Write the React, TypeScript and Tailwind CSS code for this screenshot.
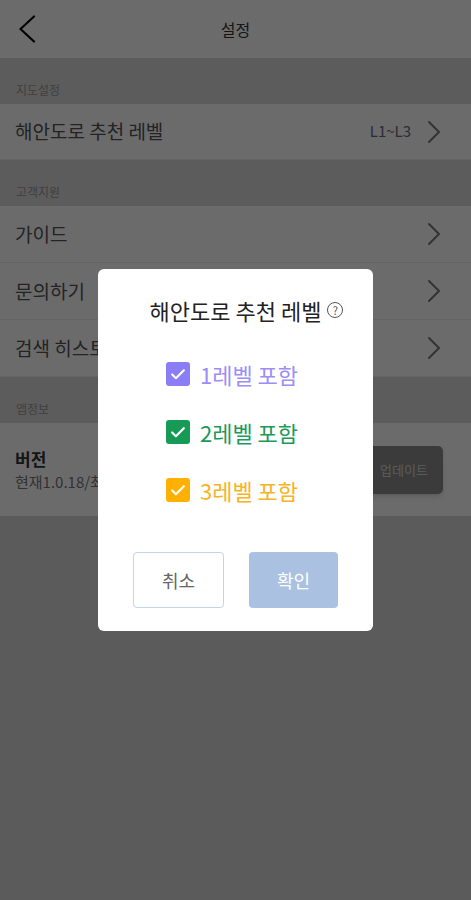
const font = { fontFamily: '"Noto Sans CJK KR", "Noto Sans", sans-serif' };

function Chevron() {
  return (
    <svg viewBox="0 0 14 24" className="h-[24px] w-[14px]" fill="none">
      <path
        d="M2 2l10 10L2 22"
        stroke="#7a7a7a"
        strokeWidth="2"
        strokeLinecap="round"
        strokeLinejoin="round"
      />
    </svg>
  );
}

function SectionHeader({ label }: { label: string }) {
  return (
    <div className="flex h-[46px] items-end bg-[#dcdcdc] px-4 pb-[8px]">
      <span className="text-[12px] leading-none text-[#999]">{label}</span>
    </div>
  );
}

function Row({
  label,
  value,
  h = "h-[57px]",
}: {
  label: string;
  value?: string;
  h?: string;
}) {
  return (
    <div className={`flex ${h} items-center border-b border-[#eeeeee] bg-white pl-[15px] pr-[30px]`}>
      <span className="flex-1 text-[19px] text-[#555]">{label}</span>
      {value ? (
        <span className="mr-[16px] text-[15px] text-[#6a6a80]">{value}</span>
      ) : null}
      <Chevron />
    </div>
  );
}

function Check({
  label,
  box,
  text,
}: {
  label: string;
  box: string;
  text: string;
}) {
  return (
    <div className="flex h-[58px] items-center gap-[10px]">
      <span
        className={`flex size-[24px] items-center justify-center rounded-[3px] ${box}`}
      >
        <svg viewBox="0 0 24 24" className="size-[20px]" fill="none">
          <path
            d="M5 12.5l4.5 4.5L19 7.5"
            stroke="white"
            strokeWidth="2.6"
            strokeLinecap="round"
            strokeLinejoin="round"
          />
        </svg>
      </span>
      <span className={`text-[22px] leading-none ${text}`}>{label}</span>
    </div>
  );
}

export default function App() {
  return (
    <div style={font} className="relative h-[900px] w-full overflow-hidden bg-[#d9d9d9]">
      {/* 설정 화면 */}
      <header className="relative flex h-[58px] items-center justify-center bg-white">
        <svg
          viewBox="0 0 18 28"
          className="absolute left-[18px] top-[15px] h-[28px] w-[18px]"
          fill="none"
        >
          <path
            d="M16 1.5L2.5 14 16 26.5"
            stroke="#000"
            strokeWidth="2.2"
            strokeLinecap="round"
            strokeLinejoin="round"
          />
        </svg>
        <span className="text-[16px] text-[#333]">설정</span>
      </header>

      <SectionHeader label="지도설정" />
      <Row label="해안도로 추천 레벨" value="L1~L3" h="h-[56px]" />
      <SectionHeader label="고객지원" />
      <Row label="가이드" />
      <Row label="문의하기" />
      <Row label="검색 히스토리 관리" />
      <SectionHeader label="앱정보" />
      <div className="flex h-[93px] items-center bg-white pl-[15px] pr-[28px]">
        <div className="flex-1">
          <p className="text-[17px] font-bold leading-[24px] text-[#333]">버전</p>
          <p className="text-[15px] leading-[22px] text-[#777]">
            현재1.0.18/최신1.0.18
          </p>
        </div>
        <button className="flex h-[48px] w-[78px] items-center justify-center rounded-[5px] bg-[#8c8c8c] text-[13px] text-[#d8d8d8] shadow-md">
          업데이트
        </button>
      </div>

      {/* 딤 + 모달 */}
      <div className="absolute inset-0 flex items-center justify-center bg-black/[0.58]">
        <div className="w-[275px] rounded-[6px] bg-white pb-[23px] pt-[27px]">
          <div className="flex items-center justify-center gap-[6px] pl-[22px]">
            <span className="text-[22px] leading-[28px] text-[#222]">
              해안도로 추천 레벨
            </span>
            <span className="flex size-[16px] items-center justify-center rounded-full border border-[#555] text-[11px] leading-none text-[#555]">
              ?
            </span>
          </div>

          <div className="mt-[21px] flex flex-col items-center pr-[7px]">
            <Check label="1레벨 포함" box="bg-[#8b7df5]" text="text-[#9b8ef7]" />
            <Check label="2레벨 포함" box="bg-[#169a56]" text="text-[#1c9a5a]" />
            <Check label="3레벨 포함" box="bg-[#ffb000]" text="text-[#f8b325]" />
          </div>

          <div className="mt-[33px] flex gap-[25px] px-[35px]">
            <button className="h-[56px] flex-1 rounded-[4px] border border-[#c6d2e6] bg-white text-[18px] text-[#666]">
              취소
            </button>
            <button className="h-[56px] flex-1 rounded-[4px] bg-[#aac1e2] text-[18px] text-white">
              확인
            </button>
          </div>
        </div>
      </div>
    </div>
  );
}
